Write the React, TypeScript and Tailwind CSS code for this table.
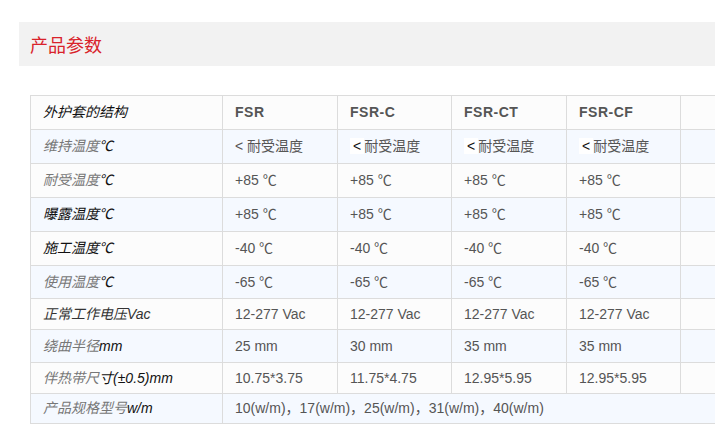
import React from "react";

const F = '"Liberation Sans", "Noto Sans CJK SC", Arial, sans-serif';

type Row = {
  h: number;
  label: React.ReactNode;
  cells?: React.ReactNode[];
  span?: string;
  blue: boolean;
};

const G = ({ children }: { children: React.ReactNode }) => (
  <span className="text-[#777]">{children}</span>
);
const D = ({ children }: { children: React.ReactNode }) => (
  <span className="text-[#111]">{children}</span>
);

const lt = (first: boolean) =>
  first ? (
    <span>
      <span className="text-[#555]">&lt;</span> 耐受温度
    </span>
  ) : (
    <span>
      <span className="bg-white text-[#111] px-[3px]">&lt;</span>耐受温度
    </span>
  );

const rows: Row[] = [
  {
    h: 34,
    blue: true,
    label: (
      <>
        <G>维持温度</G>
        <D>℃</D>
      </>
    ),
    cells: [lt(true), lt(false), lt(false), lt(false)],
  },
  {
    h: 34,
    blue: false,
    label: (
      <>
        <G>耐受温度</G>
        <D>℃</D>
      </>
    ),
    cells: ["+85 ℃", "+85 ℃", "+85 ℃", "+85 ℃"],
  },
  {
    h: 34,
    blue: true,
    label: <D>曝露温度℃</D>,
    cells: ["+85 ℃", "+85 ℃", "+85 ℃", "+85 ℃"],
  },
  {
    h: 34,
    blue: false,
    label: <D>施工温度℃</D>,
    cells: ["-40 ℃", "-40 ℃", "-40 ℃", "-40 ℃"],
  },
  {
    h: 33,
    blue: true,
    label: (
      <>
        <G>使用温度</G>
        <D>℃</D>
      </>
    ),
    cells: ["-65 ℃", "-65 ℃", "-65 ℃", "-65 ℃"],
  },
  {
    h: 31,
    blue: false,
    label: <span className="text-[#333]">正常工作电压Vac</span>,
    cells: ["12-277 Vac", "12-277 Vac", "12-277 Vac", "12-277 Vac"],
  },
  {
    h: 33,
    blue: true,
    label: (
      <>
        <G>绕曲半径</G>
        <D>mm</D>
      </>
    ),
    cells: ["25 mm", "30 mm", "35 mm", "35 mm"],
  },
  {
    h: 31,
    blue: false,
    label: (
      <>
        <G>伴热带尺</G>
        <D>寸(±0.5)mm</D>
      </>
    ),
    cells: ["10.75*3.75", "11.75*4.75", "12.95*5.95", "12.95*5.95"],
  },
  {
    h: 30,
    blue: true,
    label: (
      <>
        <G>产品规格型号</G>
        <D>w/m</D>
      </>
    ),
    span: "10(w/m)，17(w/m)，25(w/m)，31(w/m)，40(w/m)",
  },
];

const widths = [192, 115, 114, 115, 114, 120];

export default function App() {
  return (
    <div
      className="w-[715px] h-[445px] overflow-hidden bg-white"
      style={{ fontFamily: F }}
    >
      <div className="pt-[22px] pl-[19px]">
        <div className="h-[44px] bg-[#f2f2f2] flex items-center pl-[11px]">
          <span
            className="text-[18px] text-[#d9232b] leading-none"
            style={{ fontFamily: '"Noto Sans CJK SC", sans-serif' }}
          >
            产品参数
          </span>
        </div>
      </div>
      <div className="pt-[29px] pl-[30px]">
        <table className="border-collapse table-fixed w-[770px] text-[14px] text-[#555]">
          <colgroup>
            {widths.map((w, i) => (
              <col key={i} style={{ width: w }} />
            ))}
          </colgroup>
          <tbody>
            <tr className="h-[34px] bg-[#fcfcfc]">
              <td className="border border-[#dcdcdc] pl-[12px] italic text-[#111] p-0">
                外护套的结构
              </td>
              {["FSR", "FSR-C", "FSR-CT", "FSR-CF", ""].map((t, i) => (
                <td
                  key={i}
                  className="border border-[#dcdcdc] pl-[12px] p-0 font-bold tracking-[0.5px] text-[#555]"
                >
                  {t}
                </td>
              ))}
            </tr>
            {rows.map((r, ri) => (
              <tr
                key={ri}
                className={r.blue ? "bg-[#f5f9ff]" : "bg-[#fcfcfc]"}
                style={{ height: r.h }}
              >
                <td className="border border-[#dcdcdc] pl-[12px] p-0 italic whitespace-nowrap">
                  {r.label}
                </td>
                {r.span ? (
                  <td
                    colSpan={5}
                    className="border border-[#dcdcdc] pl-[12px] p-0 whitespace-nowrap"
                  >
                    {r.span}
                  </td>
                ) : (
                  <>
                    {r.cells!.map((c, ci) => (
                      <td
                        key={ci}
                        className="border border-[#dcdcdc] pl-[12px] p-0 whitespace-nowrap"
                      >
                        {c}
                      </td>
                    ))}
                    <td className="border border-[#dcdcdc] p-0"></td>
                  </>
                )}
              </tr>
            ))}
          </tbody>
        </table>
      </div>
    </div>
  );
}
